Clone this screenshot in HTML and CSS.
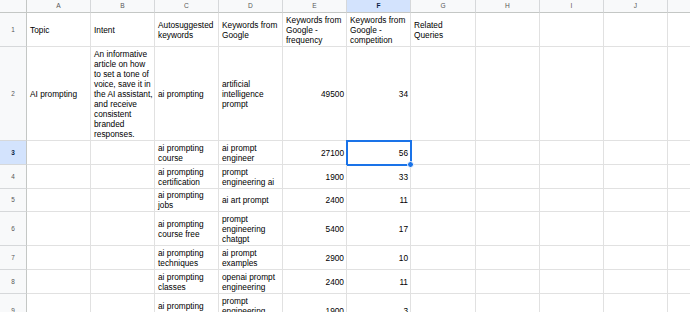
FILE: index.html
```html
<!DOCTYPE html>
<html>
<head>
<meta charset="utf-8">
<link rel="stylesheet" href="styles.css">
</head>
<body>
<div class="sheet">
  <div class="corner"></div>
  <div class="ch">A</div><div class="ch">B</div><div class="ch">C</div><div class="ch">D</div><div class="ch">E</div><div class="ch sel">F</div><div class="ch">G</div><div class="ch">H</div><div class="ch">I</div><div class="ch">J</div><div class="ch"></div>

  <div class="rh">1</div>
  <div class="c">Topic</div><div class="c">Intent</div><div class="c">Autosuggested<br>keywords</div><div class="c">Keywords from<br>Google</div><div class="c">Keywords from<br>Google -<br>frequency</div><div class="c">Keywords from<br>Google -<br>competition</div><div class="c">Related<br>Queries</div><div class="c"></div><div class="c"></div><div class="c"></div><div class="c"></div>

  <div class="rh">2</div>
  <div class="c">AI prompting</div><div class="c">An informative<br>article on how<br>to set a tone of<br>voice, save it in<br>the AI assistant,<br>and receive<br>consistent<br>branded<br>responses.</div><div class="c">ai prompting</div><div class="c">artificial<br>intelligence<br>prompt</div><div class="c n">49500</div><div class="c n">34</div><div class="c"></div><div class="c"></div><div class="c"></div><div class="c"></div><div class="c"></div>

  <div class="rh sel">3</div>
  <div class="c"></div><div class="c"></div><div class="c">ai prompting<br>course</div><div class="c">ai prompt<br>engineer</div><div class="c n">27100</div><div class="c n active">56<span class="handle"></span></div><div class="c"></div><div class="c"></div><div class="c"></div><div class="c"></div><div class="c"></div>

  <div class="rh">4</div>
  <div class="c"></div><div class="c"></div><div class="c">ai prompting<br>certification</div><div class="c">prompt<br>engineering ai</div><div class="c n">1900</div><div class="c n">33</div><div class="c"></div><div class="c"></div><div class="c"></div><div class="c"></div><div class="c"></div>

  <div class="rh">5</div>
  <div class="c"></div><div class="c"></div><div class="c">ai prompting<br>jobs</div><div class="c">ai art prompt</div><div class="c n">2400</div><div class="c n">11</div><div class="c"></div><div class="c"></div><div class="c"></div><div class="c"></div><div class="c"></div>

  <div class="rh">6</div>
  <div class="c"></div><div class="c"></div><div class="c">ai prompting<br>course free</div><div class="c">prompt<br>engineering<br>chatgpt</div><div class="c n">5400</div><div class="c n">17</div><div class="c"></div><div class="c"></div><div class="c"></div><div class="c"></div><div class="c"></div>

  <div class="rh">7</div>
  <div class="c"></div><div class="c"></div><div class="c">ai prompting<br>techniques</div><div class="c">ai prompt<br>examples</div><div class="c n">2900</div><div class="c n">10</div><div class="c"></div><div class="c"></div><div class="c"></div><div class="c"></div><div class="c"></div>

  <div class="rh">8</div>
  <div class="c"></div><div class="c"></div><div class="c">ai prompting<br>classes</div><div class="c">openai prompt<br>engineering</div><div class="c n">2400</div><div class="c n">11</div><div class="c"></div><div class="c"></div><div class="c"></div><div class="c"></div><div class="c"></div>

  <div class="rh">9</div>
  <div class="c"></div><div class="c"></div><div class="c">ai prompting<br>guide</div><div class="c">prompt<br>engineering<br>course</div><div class="c n">1900</div><div class="c n">3</div><div class="c"></div><div class="c"></div><div class="c"></div><div class="c"></div><div class="c"></div>
</div>
</body>
</html>
```

FILE: styles.css
```css
html, body {
  margin: 0;
  padding: 0;
  background: #ffffff;
  overflow: hidden;
}

.sheet {
  display: grid;
  grid-template-columns: 27px 64px 64px 64px 64px 64px 64px 65px 64px 64px 64px 40px;
  grid-template-rows: 13px 34px 94px 24px 24px 23px 34px 24px 24px 34px;
  width: 720px;
  font-family: "Liberation Sans", Arial, sans-serif;
  font-size: 8.3px;
  line-height: 10px;
  color: #000;
}

.sheet > div {
  box-sizing: border-box;
  border-right: 1px solid #e1e1e1;
  border-bottom: 1px solid #e1e1e1;
  min-width: 0;
  overflow: visible;
}

.corner {
  background: #f8f9fa;
  border-right: 1px solid #c4c7c5 !important;
  border-bottom: 1px solid #c4c7c5 !important;
}

.ch {
  background: #f8f9fa;
  border-right: 1px solid #d6d8da !important;
  border-bottom: 1px solid #c4c7c5 !important;
  display: flex;
  align-items: center;
  justify-content: center;
  font-size: 6.6px;
  color: #575757;
}

.rh {
  background: #f8f9fa;
  border-right: 1px solid #c4c7c5 !important;
  border-bottom: 1px solid #d6d8da !important;
  display: flex;
  align-items: center;
  justify-content: center;
  font-size: 6.4px;
  color: #575757;
}

.ch.sel, .rh.sel {
  background: #d3e3fd;
  color: #0b1f47;
  font-weight: bold;
}

.c {
  display: flex;
  align-items: center;
  padding: 0 2px 0 3px;
  white-space: nowrap;
  position: relative;
}

.c.n {
  justify-content: flex-end;
  padding-right: 2px;
}

.c.active {
  outline: 2px solid #1a73e8;
  outline-offset: -1px;
}

.handle {
  position: absolute;
  right: -4px;
  bottom: -4px;
  width: 5px;
  height: 5px;
  border-radius: 50%;
  background: #1a73e8;
  border: 1px solid #ffffff;
  z-index: 2;
}
```
